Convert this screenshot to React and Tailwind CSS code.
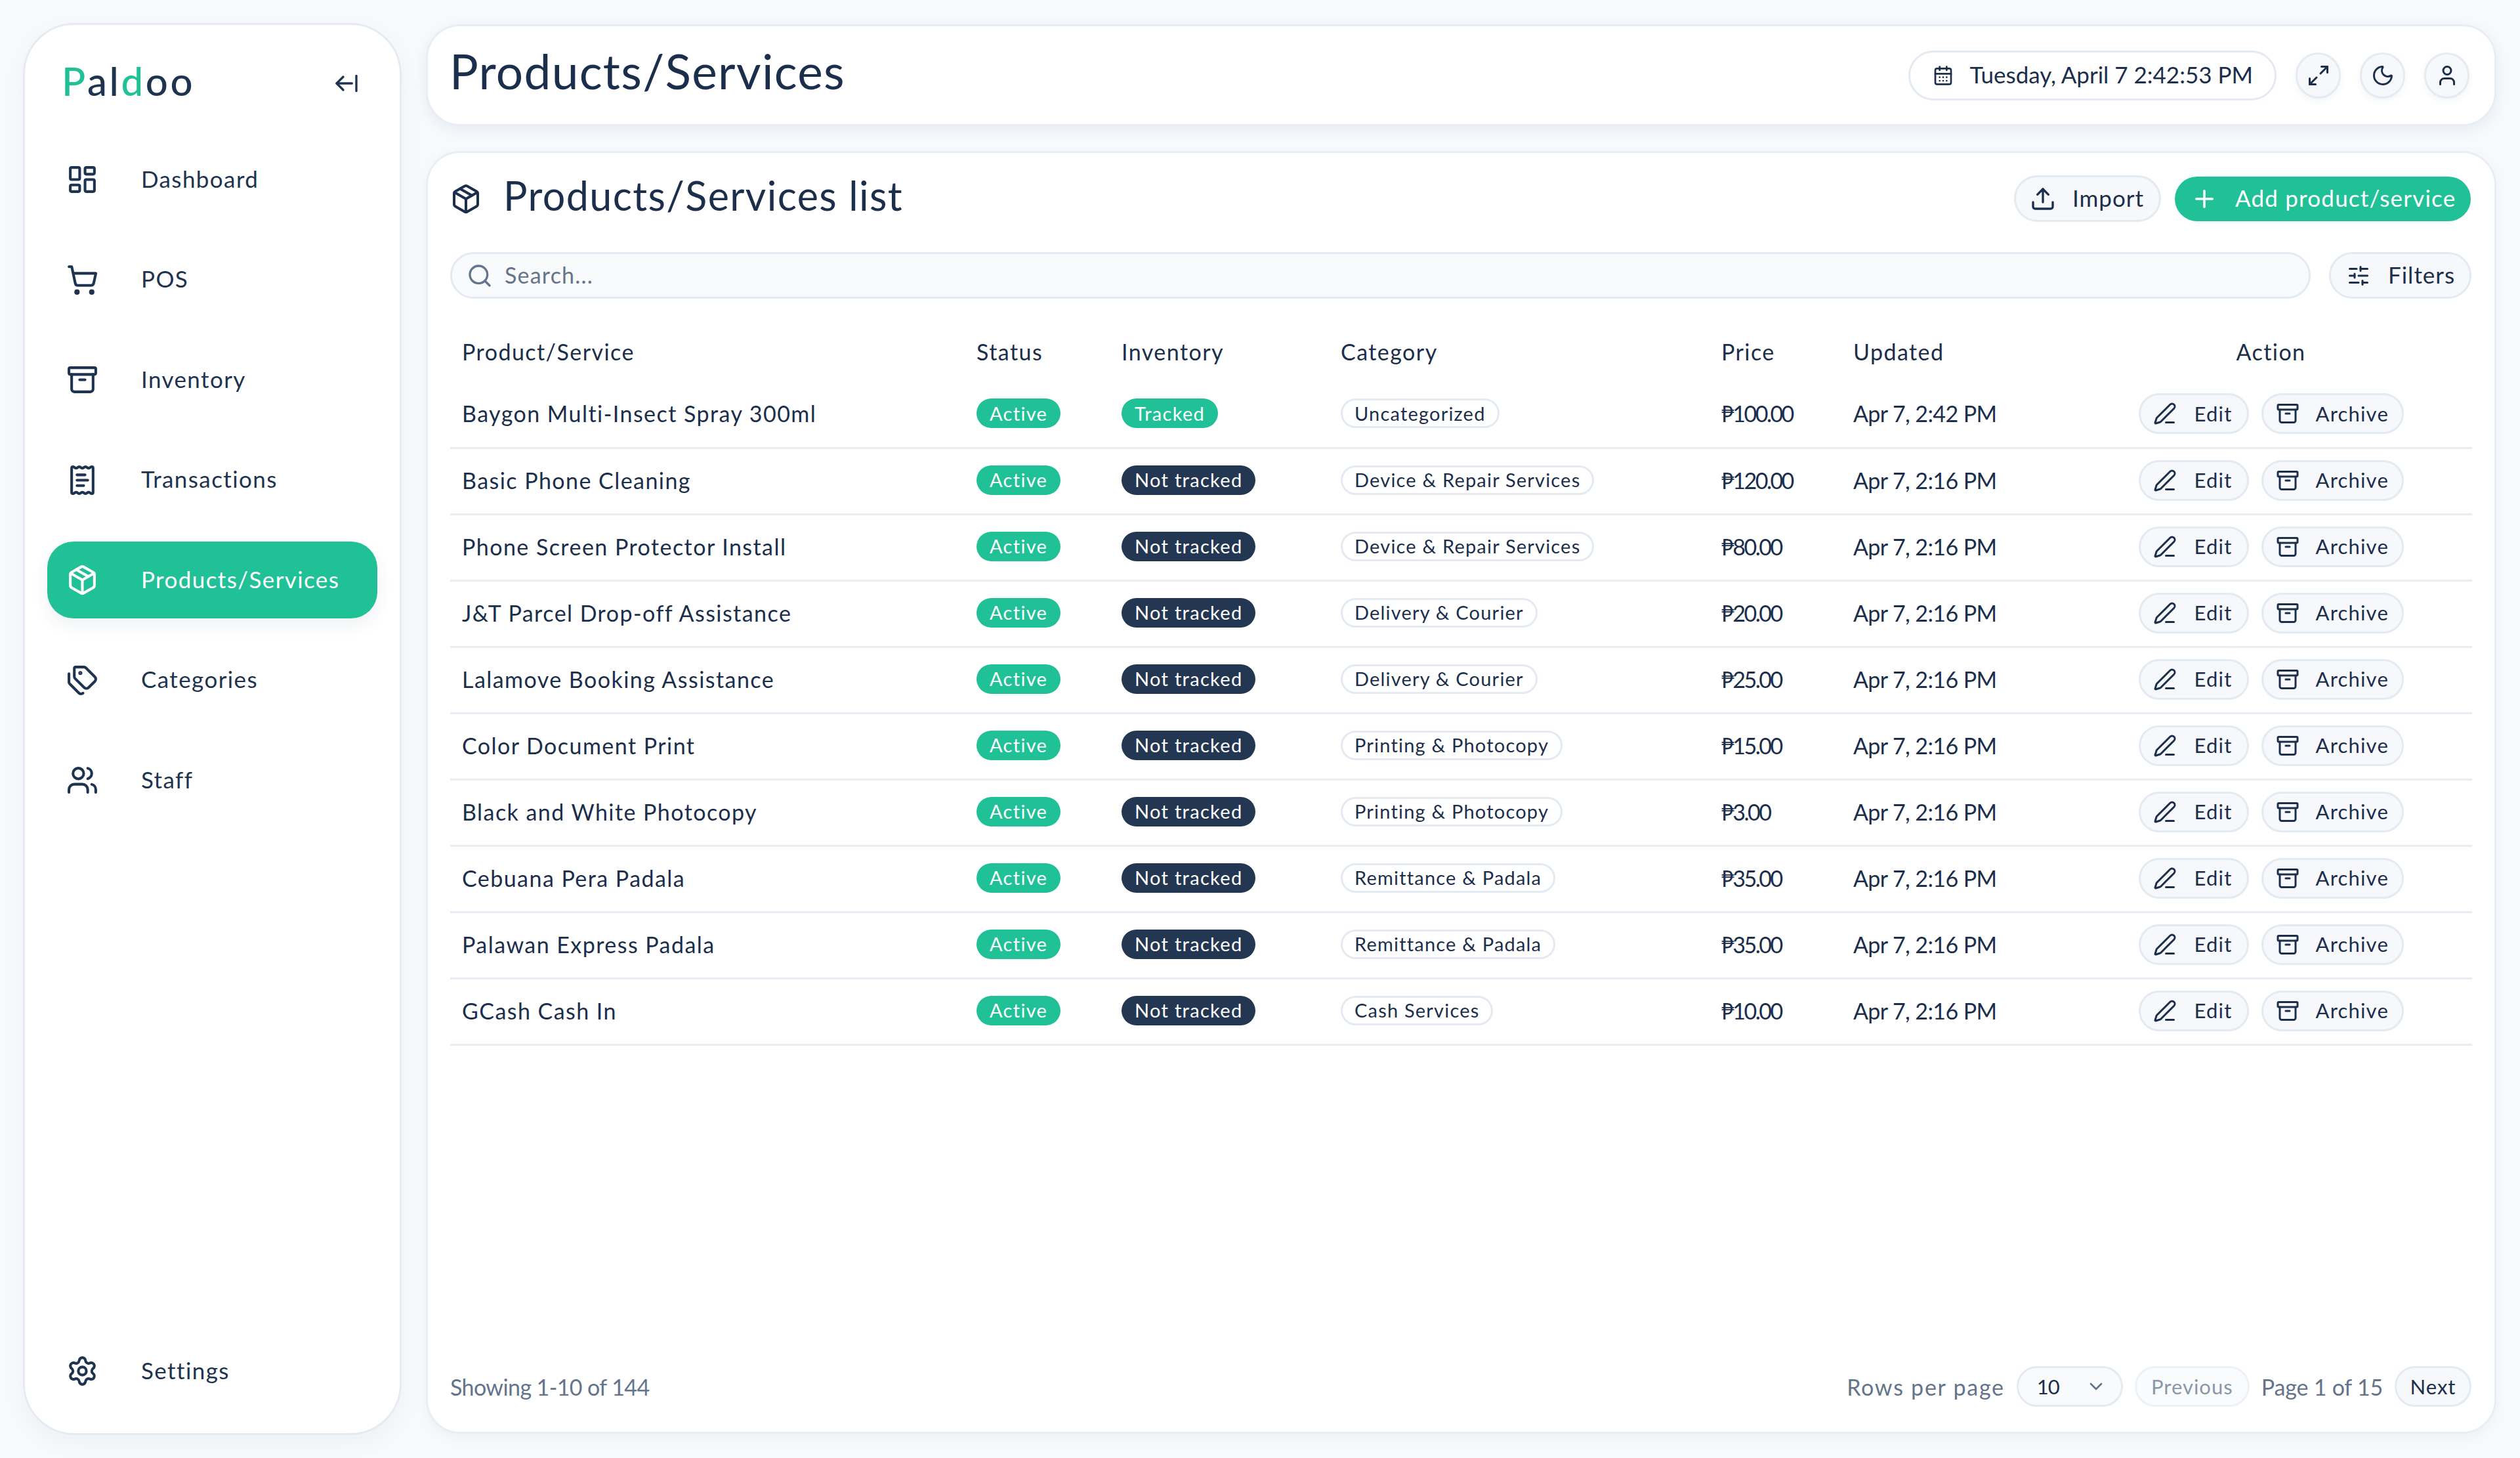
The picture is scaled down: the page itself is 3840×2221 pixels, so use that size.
import {
  LayoutDashboard,
  ShoppingCart,
  Archive,
  ReceiptText,
  Package,
  Tags,
  Users,
  Settings,
  ArrowLeftFromLine,
  CalendarDays,
  Maximize2,
  Moon,
  User,
  Upload,
  Plus,
  Search,
  SlidersHorizontal,
  PenLine,
  ChevronDown,
} from "lucide-react";

const navItems = [
  { label: "Dashboard", icon: LayoutDashboard },
  { label: "POS", icon: ShoppingCart },
  { label: "Inventory", icon: Archive },
  { label: "Transactions", icon: ReceiptText },
  { label: "Products/Services", icon: Package, active: true },
  { label: "Categories", icon: Tags },
  { label: "Staff", icon: Users },
];

const rows = [
  { name: "Baygon Multi-Insect Spray 300ml", tracked: true, category: "Uncategorized", price: "₱100.00", updated: "Apr 7, 2:42 PM" },
  { name: "Basic Phone Cleaning", category: "Device & Repair Services", price: "₱120.00", updated: "Apr 7, 2:16 PM" },
  { name: "Phone Screen Protector Install", category: "Device & Repair Services", price: "₱80.00", updated: "Apr 7, 2:16 PM" },
  { name: "J&T Parcel Drop-off Assistance", category: "Delivery & Courier", price: "₱20.00", updated: "Apr 7, 2:16 PM" },
  { name: "Lalamove Booking Assistance", category: "Delivery & Courier", price: "₱25.00", updated: "Apr 7, 2:16 PM" },
  { name: "Color Document Print", category: "Printing & Photocopy", price: "₱15.00", updated: "Apr 7, 2:16 PM" },
  { name: "Black and White Photocopy", category: "Printing & Photocopy", price: "₱3.00", updated: "Apr 7, 2:16 PM" },
  { name: "Cebuana Pera Padala", category: "Remittance & Padala", price: "₱35.00", updated: "Apr 7, 2:16 PM" },
  { name: "Palawan Express Padala", category: "Remittance & Padala", price: "₱35.00", updated: "Apr 7, 2:16 PM" },
  { name: "GCash Cash In", category: "Cash Services", price: "₱10.00", updated: "Apr 7, 2:16 PM" },
];

const NavLink = ({ item }) => {
  const Icon = item.icon;
  return (
    <a
      className={`flex h-[117px] items-center gap-[65px] rounded-[40px] pl-[29px] text-[35px] tracking-[1.4px] ${
        item.active ? "bg-[#20c197] text-white shadow-[0_10px_24px_rgba(30,51,80,0.07)]" : "text-[#1e3350]"
      }`}
    >
      <Icon size={49} strokeWidth={2} className="shrink-0" />
      <span className="pb-[3px]">{item.label}</span>
    </a>
  );
};

const RoundButton = ({ icon: Icon }) => (
  <button className="flex h-[70px] w-[69px] items-center justify-center rounded-full border-[3px] border-[#e6ebf2] bg-[#f6f8fb] text-[#1b2e4b] shadow-[0_4px_10px_rgba(30,51,80,0.05)]">
    <Icon size={36} strokeWidth={2} />
  </button>
);

const ActionButton = ({ icon: Icon, label, className }) => (
  <button className={`flex h-[62px] items-center rounded-full border-[3px] border-[#e4eaf1] bg-[#f6f8fb] pl-[19px] text-[31px] tracking-[1.2px] text-[#1b2e4b] ${className}`}>
    <Icon size={36} strokeWidth={2} className="shrink-0" />
    {label}
  </button>
);

const Badge = ({ dark, children }) => (
  <span className={`inline-flex h-[45px] items-center rounded-full px-[20px] text-[29px] tracking-[1.3px] text-white ${dark ? "bg-[#243752]" : "bg-[#20c197]"}`}>
    {children}
  </span>
);

export default function App() {
  return (
    <div className="flex h-screen gap-[37px] bg-[#f7f9fc] py-[35px] pl-[35px] pr-[36px] font-['Lato','Noto_Sans',sans-serif] text-[#1b2e4b]">
      <aside className="flex w-[577px] shrink-0 flex-col rounded-[78px] border-[3px] border-[#e6ebf2] bg-white px-[34px] pb-[36px] shadow-[0_12px_36px_rgba(30,51,80,0.04)]">
        <div className="flex h-[177px] shrink-0 items-center justify-between pl-[22px] pr-[27px]">
          <span className="mb-[8px] text-[60px] font-medium leading-none tracking-[3.6px] text-[#1e3350]">
            <span className="text-[#20c197]">P</span>al<span className="text-[#20c197]">d</span>oo
          </span>
          <ArrowLeftFromLine size={40} strokeWidth={2} className="text-[#1e3350]" />
        </div>
        <nav className="flex flex-col gap-[35.5px]">
          {navItems.map((item) => (
            <NavLink key={item.label} item={item} />
          ))}
        </nav>
        <div className="mt-auto">
          <NavLink item={{ label: "Settings", icon: Settings }} />
        </div>
      </aside>

      <main className="flex min-w-0 flex-1 flex-col gap-[38px] py-[2px]">
        <header className="flex h-[155px] shrink-0 items-center justify-between rounded-[52px] border-[3px] border-[#e9eef4] bg-white pl-[33px] pr-[38px] shadow-[0_6px_20px_rgba(30,51,80,0.07)]">
          <h1 className="pb-[11px] text-[73px] font-normal tracking-[1.3px] text-[#1b2e4b]">Products/Services</h1>
          <div className="flex items-center gap-[29px]">
            <div className="flex h-[76px] items-center gap-[24px] rounded-full border-[3px] border-[#e4eaf1] bg-white pl-[34px] pr-[33px] text-[35px]">
              <CalendarDays size={32} strokeWidth={2} />
              <span className="pb-[3px]">Tuesday, April 7 2:42:53 PM</span>
            </div>
            <RoundButton icon={Maximize2} />
            <RoundButton icon={Moon} />
            <RoundButton icon={User} />
          </div>
        </header>

        <section className="flex min-h-0 flex-1 flex-col rounded-[52px] border-[3px] border-[#e9eef4] bg-white px-[34px] shadow-[0_6px_20px_rgba(30,51,80,0.04)]">
          <div className="flex h-[151px] shrink-0 items-center justify-between pb-[12px]">
            <div className="flex items-center gap-[33px]">
              <Package size={48} strokeWidth={2} />
              <h2 className="pb-[9px] text-[61px] font-normal tracking-[1.4px]">Products/Services list</h2>
            </div>
            <div className="flex items-center gap-[21px] pr-[2px]">
              <button className="flex h-[71px] w-[224px] items-center gap-[25px] rounded-full border-[3px] border-[#e4eaf1] bg-[#f6f8fb] pl-[21px] text-[35px] tracking-[1px]">
                <Upload size={40} strokeWidth={2} />
                <span className="pb-[2px]">Import</span>
              </button>
              <button className="flex h-[68px] w-[451px] items-center gap-[26px] rounded-full bg-[#20c197] pl-[24px] text-[35px] tracking-[1.2px] text-white">
                <Plus size={42} strokeWidth={2} />
                <span className="pb-[2px]">Add product/service</span>
              </button>
            </div>
          </div>

          <div className="flex h-[71px] shrink-0 items-stretch gap-[28px]">
            <div className="flex flex-1 items-center gap-[18px] rounded-full border-[3px] border-[#e4eaf1] bg-[#f8fafc] pl-[22px] text-[34px] tracking-[1.2px] text-[#64748b]">
              <Search size={40} strokeWidth={2} className="text-[#64748b]" />
              <span className="pb-[3px]">Search...</span>
            </div>
            <button className="mr-[1px] flex w-[217px] items-center gap-[27px] rounded-full border-[3px] border-[#e4eaf1] bg-[#f6f8fb] pl-[24px] text-[35px] tracking-[1px]">
              <SlidersHorizontal size={36} strokeWidth={2} />
              <span className="pb-[3px]">Filters</span>
            </button>
          </div>

          <table className="mt-[35px] w-full table-fixed border-collapse text-[34px] tracking-[1.45px]">
            <thead>
              <tr className="h-[91px] text-left">
                <th className="w-[784px] pl-[18px] font-normal">Product/Service</th>
                <th className="w-[221px] pl-[18px] font-normal">Status</th>
                <th className="w-[334px] pl-[18px] font-normal">Inventory</th>
                <th className="w-[580px] pl-[18px] font-normal">Category</th>
                <th className="w-[201px] pl-[18px] font-normal">Price</th>
                <th className="w-[348px] pl-[18px] font-normal">Updated</th>
                <th className="text-center font-normal">Action</th>
              </tr>
            </thead>
            <tbody>
              {rows.map((row) => (
                <tr key={row.name} className="h-[101px] border-b-[3px] border-[#e8edf3]">
                  <td className="pb-[3px] pl-[18px]">{row.name}</td>
                  <td className="pb-[3px] pl-[18px]">
                    <div className="flex">
                      <Badge>Active</Badge>
                    </div>
                  </td>
                  <td className="pb-[3px] pl-[18px]">
                    <div className="flex">
                      {row.tracked ? <Badge>Tracked</Badge> : <Badge dark>Not tracked</Badge>}
                    </div>
                  </td>
                  <td className="pb-[3px] pl-[18px]">
                    <div className="flex">
                      <span className="inline-flex h-[45px] items-center rounded-full border-[3px] border-[#e4eaf1] px-[18px] text-[29px] tracking-[1.2px]">
                        {row.category}
                      </span>
                    </div>
                  </td>
                  <td className="pb-[3px] pl-[18px] tracking-[-2.5px]">{row.price}</td>
                  <td className="pb-[3px] pl-[18px] tracking-[-0.6px]">{row.updated}</td>
                  <td className="pb-[2px]">
                    <div className="flex justify-center gap-[19px]">
                      <ActionButton icon={PenLine} label="Edit" className="w-[168px] gap-[27px]" />
                      <ActionButton icon={Archive} label="Archive" className="w-[217px] gap-[25px]" />
                    </div>
                  </td>
                </tr>
              ))}
            </tbody>
          </table>

          <div className="mb-[38px] mt-auto flex h-[62px] shrink-0 items-center justify-between text-[34px] text-[#64748b]">
            <span className="tracking-[-0.6px]">Showing 1-10 of 144</span>
            <div className="flex items-center pr-[1px]">
              <span className="tracking-[1.75px]">Rows per page</span>
              <button className="ml-[18px] flex h-[62px] w-[162px] items-center justify-between rounded-full border-[3px] border-[#e4eaf1] bg-[#f8fafc] pl-[28px] pr-[22px] text-[31px] tracking-[-1px] text-[#1b2e4b]">
                10
                <ChevronDown size={32} strokeWidth={2} className="text-[#64748b]" />
              </button>
              <button className="ml-[18px] flex h-[62px] w-[175px] items-center justify-center rounded-full border-[3px] border-[#eef2f6] bg-[#fafbfc] text-[31px] tracking-[1px] text-[#8a97a8]">
                Previous
              </button>
              <span className="ml-[18px] mr-[18px] tracking-[-0.2px]">Page 1 of 15</span>
              <button className="flex h-[62px] w-[117px] items-center justify-center rounded-full border-[3px] border-[#e4eaf1] bg-[#f6f8fb] text-[31px] tracking-[1px] text-[#1b2e4b]">
                Next
              </button>
            </div>
          </div>
        </section>
      </main>
    </div>
  );
}
